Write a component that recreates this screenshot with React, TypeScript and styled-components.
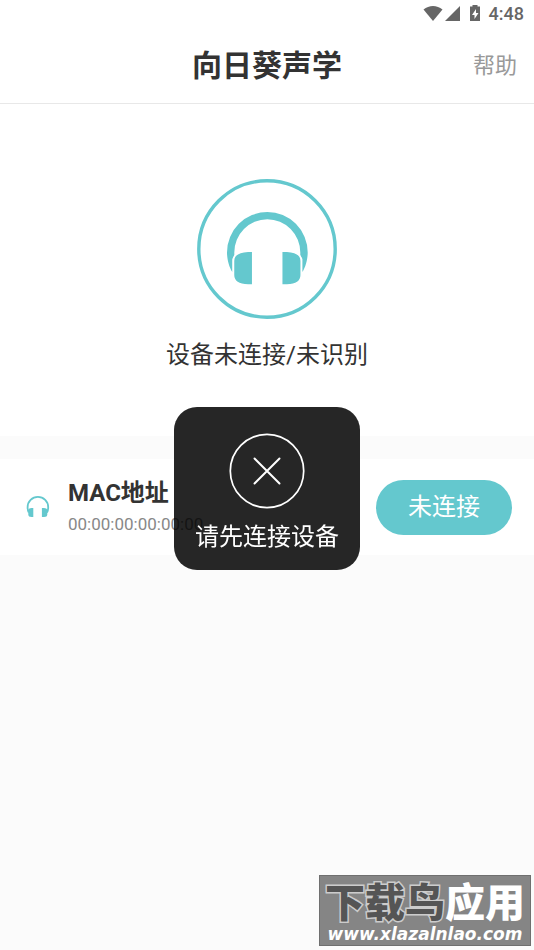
import React from 'react';
import styled, { createGlobalStyle } from 'styled-components';

const TEAL = '#64c8ce';

const GlobalStyle = createGlobalStyle`
  * { box-sizing: border-box; }
  body {
    margin: 0;
    background: #fbfbfb;
    color: #333;
    font-family: Roboto, "Noto Sans CJK SC", sans-serif;
  }
`;

const Screen = styled.div`
  min-height: 100vh;
  display: flex;
  flex-direction: column;
`;

const StatusBar = styled.div`
  height: 28px;
  padding: 0 10px 0 0;
  display: flex;
  justify-content: flex-end;
  align-items: center;
  background: #fff;
  color: #666;
`;

const StatusIcons = styled.svg`
  display: block;
  width: 60px;
  height: 20px;
`;

const Clock = styled.span`
  margin-left: 6px;
  font-size: 18px;
  line-height: 28px;
  font-weight: 500;
`;

const Header = styled.header`
  height: 76px;
  padding: 0 17px;
  display: grid;
  grid-template-columns: 1fr auto 1fr;
  align-items: center;
  background: #fff;
  border-bottom: 1px solid #e8e8e8;
`;

const Title = styled.h1`
  grid-column: 2;
  margin: 0;
  font-size: 30px;
  line-height: 44px;
  font-weight: 700;
`;

const HelpButton = styled.button`
  justify-self: end;
  padding: 0;
  border: 0;
  background: none;
  color: #999;
  font: inherit;
  font-size: 22px;
  line-height: 32px;
`;

const Hero = styled.section`
  padding: 75px 16px 63px;
  display: flex;
  flex-direction: column;
  align-items: center;
  gap: 18px;
  background: #fff;
`;

const HeroIcon = styled.svg`
  display: block;
  width: 140px;
  height: 140px;
`;

const HeroText = styled.p`
  margin: 0;
  font-size: 24px;
  line-height: 36px;
`;

const DeviceRow = styled.section`
  margin-top: 23px;
  min-height: 96px;
  padding: 0 22px 0 26px;
  display: flex;
  align-items: center;
  background: #fff;
`;

const DeviceIcon = styled.svg`
  flex: none;
  width: 24px;
  height: 24px;
`;

const DeviceInfo = styled.div`
  flex: 1;
  min-width: 0;
  margin-left: 18px;
  padding-bottom: 2px;
`;

const DeviceName = styled.h2`
  margin: 0;
  font-size: 24px;
  line-height: 36px;
  font-weight: 700;
`;

const DeviceAddress = styled.div`
  font-size: 17px;
  line-height: 26px;
  color: #888;
`;

const ConnectButton = styled.button`
  flex: none;
  padding: 9px 32px 10px;
  border: 0;
  border-radius: 28px;
  background: ${TEAL};
  color: #fff;
  font: inherit;
  font-size: 24px;
  line-height: 36px;
`;

const ToastLayer = styled.div`
  position: fixed;
  inset: 26px 0 0;
  display: flex;
  align-items: center;
  justify-content: center;
  pointer-events: none;
`;

const Toast = styled.div`
  padding: 26px 21px 15px;
  display: flex;
  flex-direction: column;
  align-items: center;
  gap: 10px;
  border-radius: 23px;
  background: rgba(0, 0, 0, 0.85);
  color: #fff;
  font-size: 24px;
  line-height: 36px;
`;

const ToastIcon = styled.svg`
  display: block;
  width: 76px;
  height: 76px;
`;

const Watermark = styled.div`
  position: fixed;
  right: 3px;
  bottom: 4px;
  padding: 8px 5px 1px;
  border: 1px solid #6f6f6f;
  background: #858585;
  color: #fff;
  white-space: nowrap;
`;

const WatermarkName = styled.div`
  font-size: 40px;
  line-height: 40px;
  font-weight: 900;
`;

const WatermarkDark = styled.span`
  color: #555;
  paint-order: stroke fill;
  -webkit-text-stroke: 3px #ccc;
`;

const WatermarkUrl = styled.div`
  font-family: "DejaVu Sans", sans-serif;
  font-size: 17px;
  line-height: 20px;
  font-weight: 700;
  font-style: italic;
  text-align: center;
`;

export default function App() {
  return (
    <>
      <GlobalStyle />
      <Screen>
        <StatusBar>
          <StatusIcons viewBox="0 0 60 20" fill="currentColor" aria-hidden="true">
            <path d="M0.5 5.5C6 0.8 14 0.8 19.500 5.500L10 17Z" />
            <path d="M37 2V17H22Z" />
            <path
              fillRule="evenodd"
              d="M49.500 1H54.500V2.500H57V17H47V2.500H49.500ZM53 5L49 11H51.500V15L55.500 9H53Z"
            />
          </StatusIcons>
          <Clock>4:48</Clock>
        </StatusBar>
        <Header>
          <Title>向日葵声学</Title>
          <HelpButton type="button">帮助</HelpButton>
        </Header>
        <Hero>
          <HeroIcon viewBox="0 0 140 140" aria-hidden="true">
            <circle cx="70" cy="70" r="68.200" fill="none" stroke={TEAL} strokeWidth="3.400" />
            <path
              fill={TEAL}
              d="M35.300 93C32 88 30 80 30 73.500A40.350 40.500 0 0 1 110.700 73.500C110.700 80 108.700 88 105.400 93V80L103.300 76V73.500A33 33.300 0 0 0 37.300 73.500V76L35.300 80Z"
            />
            <path
              fill={TEAL}
              stroke="#fff"
              strokeWidth="1.500"
              d="M55.700 72.300H51Q36.500 73 36.500 82V96Q36.500 105.500 51 106H55.700ZM84.700 72.300H90Q104.200 73 104.200 82V96Q104.200 105.500 90 106H84.700Z"
            />
          </HeroIcon>
          <HeroText>设备未连接/未识别</HeroText>
        </Hero>
        <DeviceRow>
          <DeviceIcon viewBox="0 0 24 24" aria-hidden="true">
            <path
              d="M2.800 17.500C1.900 16 1.600 14 1.600 12.200A10.300 10.300 0 0 1 22.200 12.200C22.200 14 21.900 16 21 17.500"
              fill="none"
              stroke={TEAL}
              strokeWidth="1.800"
            />
            <path
              fill={TEAL}
              d="M7.300 13H5.500Q2.300 13.200 2.300 15.500V19.500Q2.300 22 5.500 22H7.300ZM15.900 13H18Q21.300 13.200 21.300 15.500V19.500Q21.300 22 18 22H15.900Z"
            />
          </DeviceIcon>
          <DeviceInfo>
            <DeviceName>MAC地址</DeviceName>
            <DeviceAddress>00:00:00:00:00:00</DeviceAddress>
          </DeviceInfo>
          <ConnectButton type="button">未连接</ConnectButton>
        </DeviceRow>
      </Screen>
      <ToastLayer>
        <Toast role="alert">
          <ToastIcon viewBox="0 0 76 76" fill="none" stroke="#fff" aria-hidden="true">
            <circle cx="38" cy="38" r="36.700" strokeWidth="1.700" />
            <path d="M25.500 25.500L50.500 50.500M50.500 25.500L25.500 50.500" strokeWidth="2" strokeLinecap="round" />
          </ToastIcon>
          请先连接设备
        </Toast>
      </ToastLayer>
      <Watermark>
        <WatermarkName>
          <WatermarkDark>下载鸟</WatermarkDark>应用
        </WatermarkName>
        <WatermarkUrl>www.xlazalnlao.com</WatermarkUrl>
      </Watermark>
    </>
  );
}
